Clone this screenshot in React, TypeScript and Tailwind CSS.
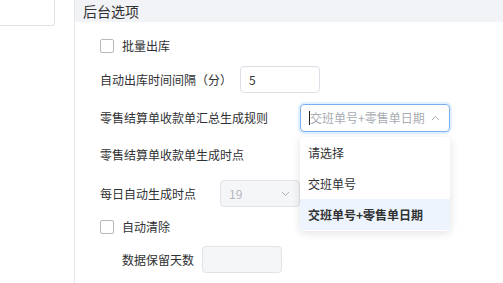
const font = { fontFamily: '"Noto Sans CJK SC", "Noto Sans", sans-serif' };

function Checkbox() {
  return <span className="w-[14px] h-[14px] rounded-[2px] border border-[#b8b8b8] bg-white shrink-0" />;
}

function Chevron({ up = false, color = "#b0b0b0" }: { up?: boolean; color?: string }) {
  return (
    <svg width="9" height="6" viewBox="0 0 9 6" fill="none" className="shrink-0">
      <path d={up ? "M1 5 L4.5 1.5 L8 5" : "M1 1 L4.5 4.5 L8 1"} stroke={color} strokeWidth="1" />
    </svg>
  );
}

export default function App() {
  return (
    <div className="relative w-[503px] h-[283px] flex bg-white overflow-hidden text-[12px] text-[#303133] whitespace-nowrap" style={font}>
      <div className="w-[75px] shrink-0 border-r border-[#e4e6eb]">
        <div className="w-[55px] h-[26px] border border-[#e3e3e3] border-l-0 border-t-0 rounded-br-[3px]" />
      </div>
      <div className="flex-1 flex flex-col">
        <div className="h-[22px] bg-[#f2f3f6] pl-[8px] flex items-center leading-none text-[14px]">后台选项</div>
        <div className="pl-[25px] flex flex-col">
          <div className="mt-[14px] h-[20px] flex items-center gap-[8px]">
            <Checkbox />
            <span>批量出库</span>
          </div>
          <div className="mt-[10px] h-[27px] flex items-center">
            <span className="w-[140px]">自动出库时间间隔（分）</span>
            <div className="w-[80px] h-[27px] border border-[#dcdfe6] rounded-[4px] flex items-center px-[8px]">5</div>
          </div>
          <div className="mt-[11px] h-[28px] flex items-center">
            <span className="w-[200px]">零售结算单收款单汇总生成规则</span>
            <div className="w-[150px] h-[28px] border border-[#79b0ea] rounded-[4px] shadow-[0_0_0_2px_rgba(64,158,255,0.15)] flex items-center pl-[8px] pr-[9px]">
              <span className="w-px h-[14px] bg-[#222]" />
              <span className="flex-1 text-[#a8abb2]">交班单号+零售单日期</span>
              <Chevron up />
            </div>
          </div>
          <div className="mt-[13px] h-[20px] flex items-center">零售结算单收款单生成时点</div>
          <div className="mt-[15px] h-[27px] flex items-center">
            <span className="w-[120px]">每日自动生成时点</span>
            <div className="w-[80px] h-[27px] border border-[#e1e3e8] bg-[#f5f6f8] rounded-[4px] flex items-center pl-[8px] pr-[9px] text-[#b4b6bb]">
              <span className="flex-1">19</span>
              <Chevron />
            </div>
          </div>
          <div className="mt-[10px] h-[20px] flex items-center gap-[8px]">
            <Checkbox />
            <span>自动清除</span>
          </div>
          <div className="mt-[9px] h-[27px] flex items-center pl-[22px]">
            <span className="w-[80px]">数据保留天数</span>
            <div className="w-[80px] h-[27px] border border-[#e1e3e8] bg-[#f5f6f8] rounded-[4px]" />
          </div>
        </div>
      </div>
      <div className="absolute left-[300px] top-[137px] w-[150px] bg-white rounded-[4px] shadow-[0_2px_10px_rgba(0,0,0,0.12)] pb-[1px] overflow-hidden">
        <div className="h-[31px] flex items-center px-[8px]">请选择</div>
        <div className="h-[31px] flex items-center px-[8px]">交班单号</div>
        <div className="h-[31px] flex items-center px-[8px] bg-[#eef4fd] font-bold">交班单号+零售单日期</div>
      </div>
    </div>
  );
}
